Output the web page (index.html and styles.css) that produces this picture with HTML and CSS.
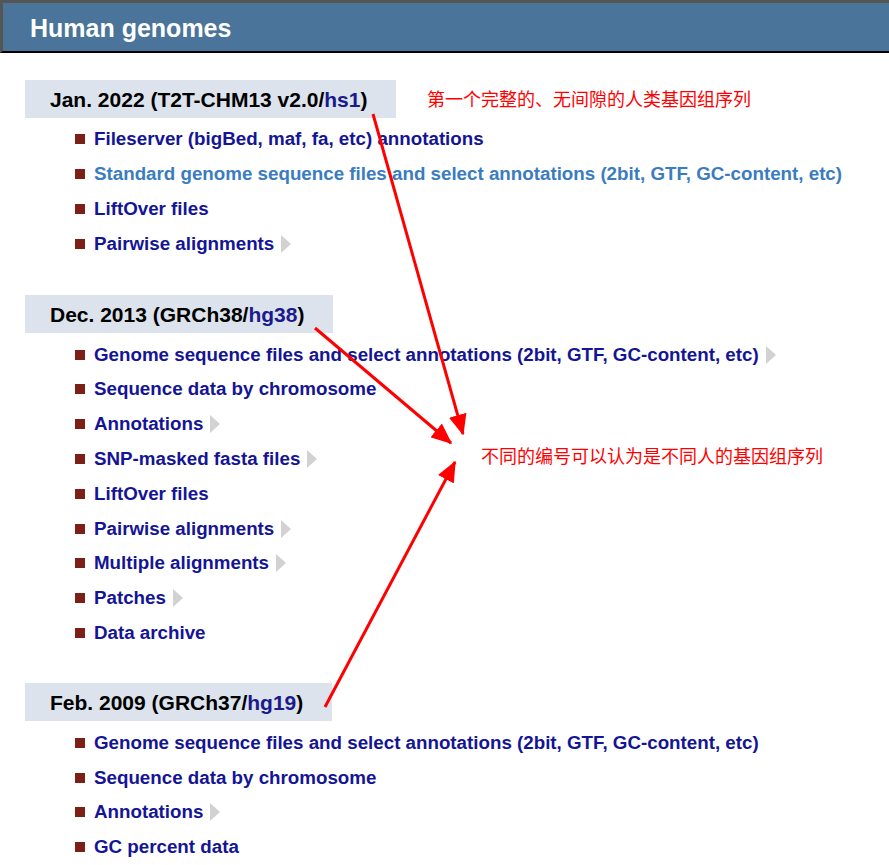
FILE: index.html
```html
<!DOCTYPE html>
<html>
<head>
<meta charset="utf-8">
<link rel="stylesheet" href="styles.css">
</head>
<body>
<div class="page">
  <div class="header">Human genomes</div>

  <section class="assembly">
    <div class="label">Jan. 2022 (T2T-CHM13 v2.0/<span class="db">hs1</span>)</div>
    <ul class="links">
      <li><span class="sq"></span><a>Fileserver (bigBed, maf, fa, etc) annotations</a></li>
      <li><span class="sq"></span><a class="visited">Standard genome sequence files and select annotations (2bit, GTF, GC-content, etc)</a></li>
      <li><span class="sq"></span><a>LiftOver files</a></li>
      <li><span class="sq"></span><a>Pairwise alignments</a><span class="tri"></span></li>
    </ul>
  </section>

  <section class="assembly">
    <div class="label">Dec. 2013 (GRCh38/<span class="db">hg38</span>)</div>
    <ul class="links">
      <li><span class="sq"></span><a>Genome sequence files and select annotations (2bit, GTF, GC-content, etc)</a><span class="tri"></span></li>
      <li><span class="sq"></span><a>Sequence data by chromosome</a></li>
      <li><span class="sq"></span><a>Annotations</a><span class="tri"></span></li>
      <li><span class="sq"></span><a>SNP-masked fasta files</a><span class="tri"></span></li>
      <li><span class="sq"></span><a>LiftOver files</a></li>
      <li><span class="sq"></span><a>Pairwise alignments</a><span class="tri"></span></li>
      <li><span class="sq"></span><a>Multiple alignments</a><span class="tri"></span></li>
      <li><span class="sq"></span><a>Patches</a><span class="tri"></span></li>
      <li><span class="sq"></span><a>Data archive</a></li>
    </ul>
  </section>

  <section class="assembly">
    <div class="label">Feb. 2009 (GRCh37/<span class="db">hg19</span>)</div>
    <ul class="links">
      <li><span class="sq"></span><a>Genome sequence files and select annotations (2bit, GTF, GC-content, etc)</a></li>
      <li><span class="sq"></span><a>Sequence data by chromosome</a></li>
      <li><span class="sq"></span><a>Annotations</a><span class="tri"></span></li>
      <li><span class="sq"></span><a>GC percent data</a></li>
    </ul>
  </section>

  <div class="note note1">第一个完整的、无间隙的人类基因组序列</div>
  <div class="note note2">不同的编号可以认为是不同人的基因组序列</div>

  <svg class="arrows" width="889" height="865" viewBox="0 0 889 865">
    <defs>
      <marker id="ah" markerWidth="7" markerHeight="6" refX="6.5" refY="3" orient="auto" markerUnits="strokeWidth">
        <path d="M0,0 L7,3 L0,6 Z" fill="#ff0000"/>
      </marker>
    </defs>
    <line x1="373" y1="114" x2="463" y2="434" stroke="#ff0000" stroke-width="3" marker-end="url(#ah)"/>
    <line x1="315" y1="328" x2="451" y2="443" stroke="#ff0000" stroke-width="3" marker-end="url(#ah)"/>
    <line x1="325" y1="707" x2="455" y2="462" stroke="#ff0000" stroke-width="3" marker-end="url(#ah)"/>
  </svg>
</div>
</body>
</html>
```

FILE: styles.css
```css
html, body {
  margin: 0;
  padding: 0;
  background: #ffffff;
}
body {
  font-family: "Liberation Sans", Arial, sans-serif;
  overflow: hidden;
}
.page {
  position: relative;
  width: 889px;
  height: 865px;
  overflow: hidden;
}
.header {
  height: 48px;
  border-left: 3px solid #555555;
  border-top: 3px solid #555555;
  border-bottom: 2px solid #000000;
  background: #4a7499;
  color: #ffffff;
  font-weight: bold;
  font-size: 25px;
  line-height: 50px;
  padding-left: 27px;
}
.assembly {
  margin-top: 27px;
}
.assembly + .assembly {
  margin-top: 34px;
}
.assembly:last-of-type {
  margin-top: 33px;
}
.label {
  display: inline-block;
  margin-left: 25px;
  padding: 0 29px 0 25px;
  height: 38px;
  line-height: 39px;
  background: #dce3ec;
  color: #000000;
  font-weight: bold;
  font-size: 21px;
}
.db {
  color: #1a1a8c;
}
.links {
  list-style: none;
  margin: 4px 0 0 0;
  padding: 0 0 0 75px;
}
.links li {
  display: flex;
  align-items: center;
  height: 34.8px;
}
.sq {
  width: 10px;
  height: 10px;
  background: #7b1f17;
  margin-right: 9px;
  flex: none;
}
.links a {
  color: #141496;
  font-weight: bold;
  font-size: 18.75px;
}
.links a.visited {
  color: #3a7cbf;
}
.tri {
  width: 0;
  height: 0;
  border-top: 9px solid transparent;
  border-bottom: 9px solid transparent;
  border-left: 10px solid #d2d2d2;
  margin-left: 7px;
}
.note {
  position: absolute;
  color: #ff0000;
  font-family: "Noto Sans CJK SC", sans-serif;
  font-size: 18px;
  line-height: 24px;
  white-space: nowrap;
}
.note1 {
  left: 427px;
  top: 86px;
}
.note2 {
  left: 481px;
  top: 443px;
}
.arrows {
  position: absolute;
  left: 0;
  top: 0;
  pointer-events: none;
}
```
